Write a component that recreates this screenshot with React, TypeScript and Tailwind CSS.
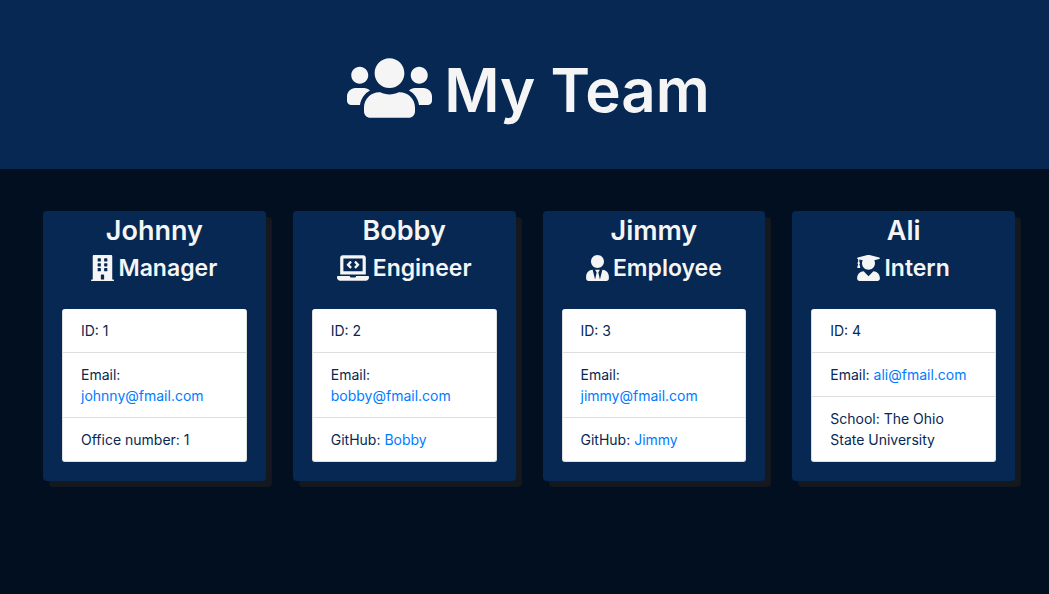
import type { ReactNode } from "react";
import type { IconType } from "react-icons";
import { FaUsers, FaBuilding, FaLaptopCode, FaUserTie, FaUserGraduate } from "react-icons/fa";

type Member = {
  id: number;
  name: string;
  role: string;
  icon: IconType;
  iconWidth: string;
  email: string;
  extra: ReactNode;
};

const linkClass = "text-[#007bff] hover:underline";

const team: Member[] = [
  { id: 1, name: "Johnny", role: "Manager", icon: FaBuilding, iconWidth: "w-[23px]", email: "johnny@fmail.com", extra: "Office number: 1" },
  {
    id: 2,
    name: "Bobby",
    role: "Engineer",
    icon: FaLaptopCode,
    iconWidth: "w-[32px]",
    email: "bobby@fmail.com",
    extra: <>GitHub: <a className={linkClass} href="https://github.com/Bobby">Bobby</a></>,
  },
  {
    id: 3,
    name: "Jimmy",
    role: "Employee",
    icon: FaUserTie,
    iconWidth: "w-[23px]",
    email: "jimmy@fmail.com",
    extra: <>GitHub: <a className={linkClass} href="https://github.com/Jimmy">Jimmy</a></>,
  },
  { id: 4, name: "Ali", role: "Intern", icon: FaUserGraduate, iconWidth: "w-[23px]", email: "ali@fmail.com", extra: "School: The Ohio State University" },
];

function MemberCard({ member }: { member: Member }) {
  const Icon = member.icon;
  return (
    <article className="rounded-sm bg-[#062853] shadow-[6px_6px_1px_#15191f]">
      <header className="text-center font-semibold text-[#f5f5f5]">
        <h2 className="pt-0.5 text-[27px] leading-9">{member.name}</h2>
        <h3 className="flex items-center justify-center gap-1 pt-[3px] text-[23px] leading-8">
          <Icon className={`h-[26px] shrink-0 ${member.iconWidth}`} aria-hidden="true" />
          {member.role}
        </h3>
      </header>
      <div className="px-[19px] pt-[25px] pb-[19px]">
        <ul className="divide-y divide-[#dfdfdf] overflow-hidden rounded-[3px] border-x border-b border-[#dfdfdf] bg-white text-sm leading-[21px] text-[#062853]">
          <li className="px-[18px] py-[11px]">ID: {member.id}</li>
          <li className="px-[18px] py-[11px]">
            Email: <a className={linkClass} href={`mailto:${member.email}`}>{member.email}</a>
          </li>
          <li className="px-[18px] py-[11px]">{member.extra}</li>
        </ul>
      </div>
    </article>
  );
}

export default function App() {
  return (
    <div className="min-h-screen bg-[#010f21] font-['Inter',sans-serif]">
      <header className="flex items-center justify-center gap-3 bg-[#062853] pt-[46px] pb-[39px] pl-2 text-[#f5f5f5]">
        <FaUsers className="h-[68px] w-[85px]" aria-hidden="true" />
        <h1 className="pt-1 text-[60px] leading-20 font-semibold">My Team</h1>
      </header>
      <main className="grid grid-cols-1 items-start gap-[27px] py-[42px] pr-[34px] pl-[43px] sm:grid-cols-2 lg:grid-cols-4">
        {team.map((member) => (
          <MemberCard key={member.id} member={member} />
        ))}
      </main>
    </div>
  );
}
